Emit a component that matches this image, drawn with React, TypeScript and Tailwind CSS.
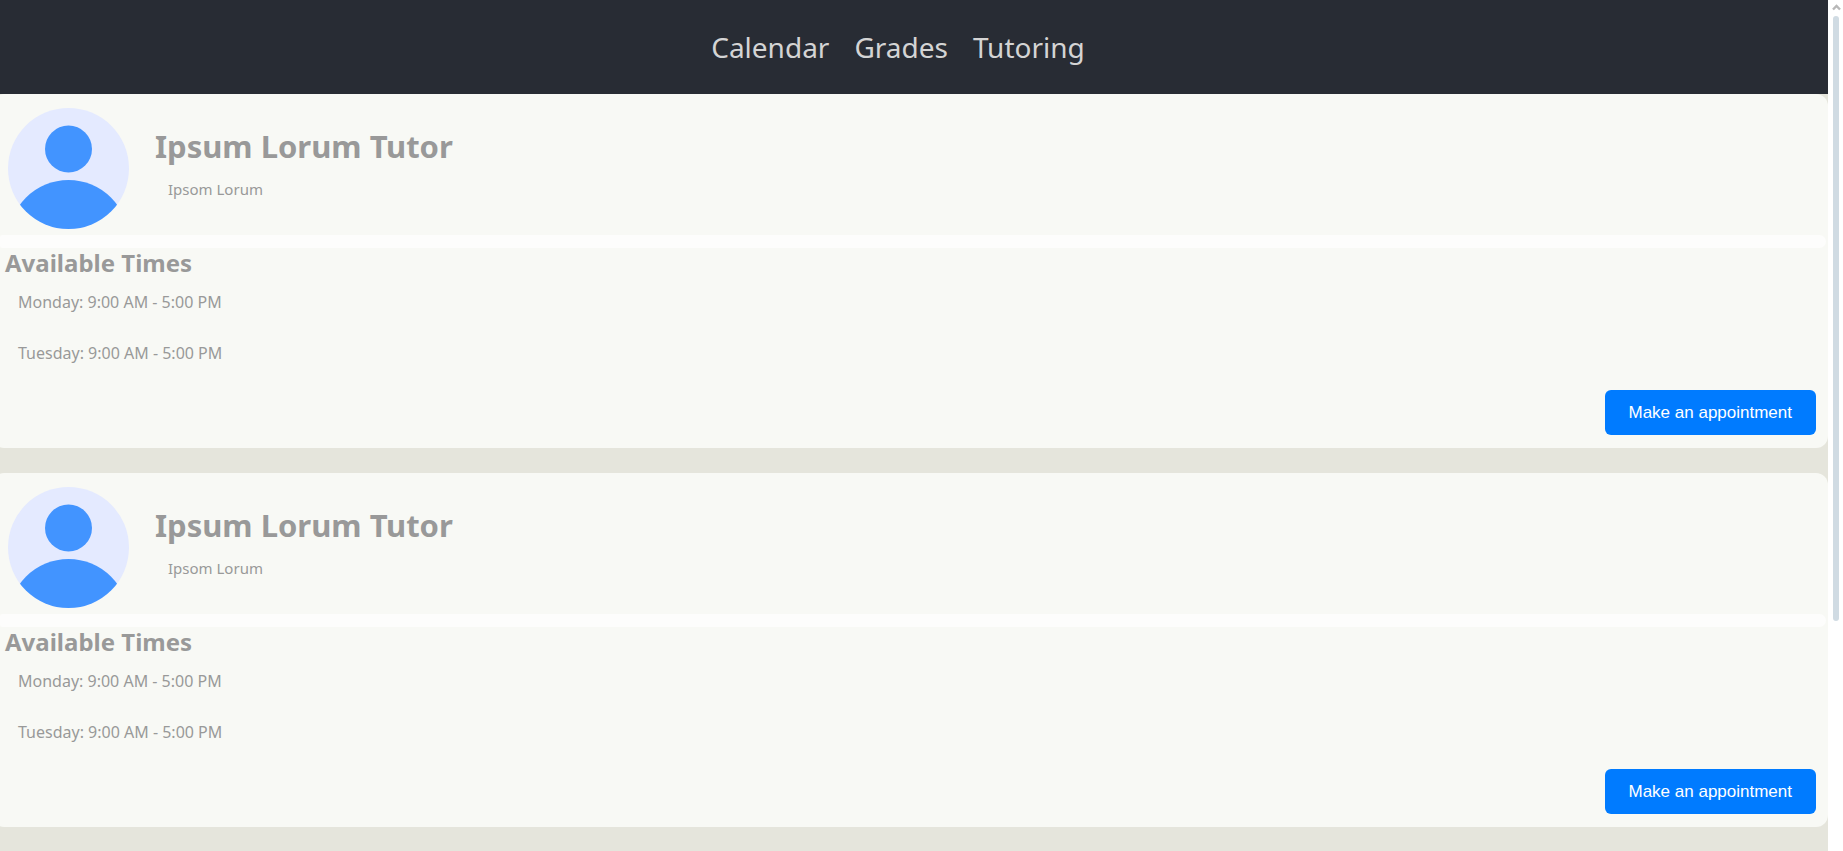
const days = ["Monday: 9:00 AM - 5:00 PM", "Tuesday: 9:00 AM - 5:00 PM"];

const tutors = [
  { id: 1, name: "Ipsum Lorum Tutor", about: "Ipsom Lorum", times: days },
  { id: 2, name: "Ipsum Lorum Tutor", about: "Ipsom Lorum", times: days },
];

type Tutor = (typeof tutors)[number];

function Avatar() {
  return (
    <svg viewBox="0 0 121 121" className="size-[121px] shrink-0" aria-hidden="true">
      <defs>
        <clipPath id="avatar-clip">
          <circle cx="60.5" cy="60.5" r="60.5" />
        </clipPath>
      </defs>
      <circle cx="60.5" cy="60.5" r="60.5" fill="#e4eaff" />
      <circle cx="60.5" cy="41" r="23.5" fill="#4294ff" />
      <circle cx="60.5" cy="132" r="60" fill="#4294ff" clipPath="url(#avatar-clip)" />
    </svg>
  );
}

function TutorCard({ tutor }: { tutor: Tutor }) {
  return (
    <article className="-ml-2 rounded-xl bg-[#f8f9f5] pb-[13px] text-[#999999]">
      <div className="flex gap-[26px] pt-[14px] pb-[6px] pl-4">
        <Avatar />
        <div className="pt-4">
          <h2 className="text-[31px] leading-[44px] font-bold">{tutor.name}</h2>
          <p className="pt-[9px] pl-[13px] text-[15px] leading-6">{tutor.about}</p>
        </div>
      </div>
      <div className="mr-0.5 ml-2 h-[13px] rounded-l-sm rounded-r-xl bg-[#fdfdfc]" />
      <section className="pl-[13px]">
        <h3 className="text-2xl leading-[29px] font-bold">Available Times</h3>
        <ul className="flex flex-col gap-[27px] pt-[13px] pl-[13px]">
          {tutor.times.map((time) => (
            <li key={time} className="text-base leading-6">
              {time}
            </li>
          ))}
        </ul>
      </section>
      <div className="flex justify-end pt-[25px] pr-3">
        <button
          type="button"
          className="h-[45px] rounded-md bg-[#007bff] px-6 font-['Liberation_Sans',sans-serif] text-[17px] text-white"
        >
          Make an appointment
        </button>
      </div>
    </article>
  );
}

function ScrollTrack() {
  return (
    <div className="flex w-[15px] shrink-0 flex-col items-center bg-white" aria-hidden="true">
      <svg viewBox="0 0 15 16" className="h-4 w-[15px]">
        <path d="M5 9.5 8.5 6 12 9.5" fill="none" stroke="#b8b8b8" strokeWidth="2.4" />
      </svg>
      <div className="ml-px h-[71.1vh] w-1.5 rounded-full bg-[#d0dbe3]" />
    </div>
  );
}

export default function App() {
  return (
    <div className="flex h-screen overflow-hidden font-['Noto_Sans',sans-serif]">
      <div className="min-w-0 flex-1 overflow-hidden bg-[#e5e5dc]">
        <header className="flex h-[94px] items-center justify-center pr-8 bg-[#282c34]">
          <nav className="flex gap-[25px] text-[28px] leading-[42px] text-[#d4d4d4]">
            <a href="#calendar">Calendar</a>
            <a href="#grades">Grades</a>
            <a href="#tutoring">Tutoring</a>
          </nav>
        </header>
        <main className="flex flex-col gap-[25px]">
          {tutors.map((tutor) => (
            <TutorCard key={tutor.id} tutor={tutor} />
          ))}
        </main>
      </div>
      <ScrollTrack />
    </div>
  );
}
